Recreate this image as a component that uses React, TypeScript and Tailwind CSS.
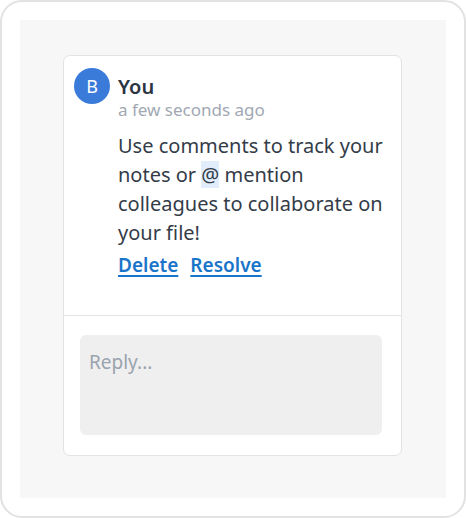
export default function App() {
  return (
    <div
      className="w-[466px] h-[518px] bg-white border-2 border-[#e2e2e2] rounded-[22px] p-[18px]"
      style={{ fontFamily: '"Noto Sans", "Open Sans", sans-serif' }}
    >
      <div className="h-full bg-[#f7f7f7] pt-[35px] pl-[43px] pr-[44px]">
        <div className="bg-white border border-[#e3e3e3] rounded-[7px] h-[401px] flex flex-col">
          <div className="px-[10px] pt-[12px] pb-[38px] border-b border-[#e3e3e3]">
            <div className="flex gap-[8px]">
              <div className="w-[36px] h-[36px] rounded-full bg-[#3a7bd9] text-white flex items-center justify-center text-[18px] shrink-0">
                B
              </div>
              <div className="min-w-0">
                <div className="text-[20px] font-semibold text-[#2b3441] leading-[26px] mt-[6px]">You</div>
                <div className="text-[17px] text-[#a1a8b3] leading-[20px]">a few seconds ago</div>
                <p className="text-[20px] text-[#333c48] leading-[29px] mt-[11px]">
                  Use comments to track your notes or <span className="bg-[#e2edfb]">@</span> mention colleagues to
                  collaborate on your file!
                </p>
                <div className="flex gap-[12px] mt-[6px] text-[19px] font-semibold text-[#1a74c9] leading-[24px]">
                  <a className="underline underline-offset-[3px] decoration-2">Delete</a>
                  <a className="underline underline-offset-[3px] decoration-2">Resolve</a>
                </div>
              </div>
            </div>
          </div>
          <div className="pl-[16px] pr-[19px] pt-[19px]">
            <div className="h-[100px] bg-[#efefef] rounded-[6px] px-[9px] pt-[14px] text-[19px] text-[#9aa3ae] leading-[26px]">
              Reply...
            </div>
          </div>
        </div>
      </div>
    </div>
  );
}
